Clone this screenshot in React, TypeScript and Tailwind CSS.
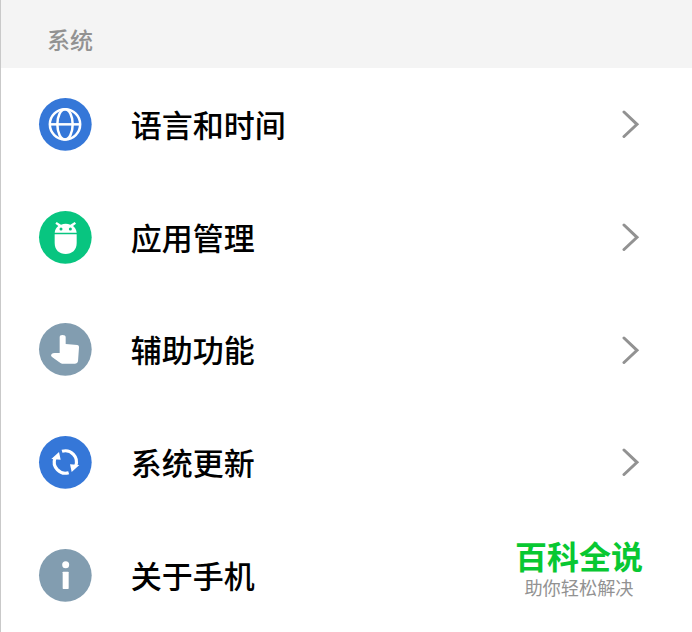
import type { ReactNode } from "react";

type Row = { label: string; color: string; icon: ReactNode; arrow: boolean };

const rows: Row[] = [
  {
    label: "语言和时间",
    color: "#3577d8",
    arrow: true,
    icon: (
      <g fill="none" stroke="#fff" strokeWidth="7.5">
        <circle cx="78" cy="79" r="45.5" />
        <ellipse cx="78" cy="79" rx="23" ry="45.5" />
        <path d="M32 79H124" />
      </g>
    ),
  },
  {
    label: "应用管理",
    color: "#08c580",
    arrow: true,
    icon: (
      <>
        <path
          fill="#fff"
          d="M47 65C48 56 52 49 58 45L49 38L53 33L66 41Q80 36 94 41L107 33L111 38L102 45C108 49 112 56 113 65ZM47 70H113V96C113 117 99 129 80 129S47 117 47 96Z"
        />
        <circle cx="66" cy="54" r="4.5" fill="#08c580" />
        <circle cx="94" cy="54" r="4.5" fill="#08c580" />
      </>
    ),
  },
  {
    label: "辅助功能",
    color: "#829db0",
    arrow: true,
    icon: (
      <path
        fill="#fff"
        d="M62 43Q62 36 70 36Q80 36 80 43V63L115 66Q121 67 120 73L117 115Q116 122 108 122H69Q64 121 60 117L38 101Q34 96 38 93Q41 90 47 90H62Z"
      />
    ),
  },
  {
    label: "系统更新",
    color: "#3577d8",
    arrow: true,
    icon: (
      <>
        <g fill="none" stroke="#fff" strokeWidth="9.5">
          <path d="M69 46A33.5 33.5 0 0 1 110 90" />
          <path d="M89 110A33.5 33.5 0 0 1 48 66" />
        </g>
        <path fill="#fff" d="M60 48L37 69L65 71ZM98 108L121 87L93 85Z" />
      </>
    ),
  },
  {
    label: "关于手机",
    color: "#829db0",
    arrow: false,
    icon: (
      <>
        <circle cx="80" cy="47" r="10.5" fill="#fff" />
        <rect x="71" y="68" width="18" height="52" rx="2" fill="#fff" />
      </>
    ),
  },
];

function SettingRow({ label, color, icon, arrow }: Row) {
  return (
    <li className="flex h-[112.7px] items-center pr-[52.5px] pl-[38px]">
      <svg className="size-[52.7px] shrink-0 overflow-visible" viewBox="0 0 158 158">
        <circle cx="79" cy="79" r="79" fill={color} />
        {icon}
      </svg>
      <span className="ml-[39px] flex-1 pb-[1px] text-[31px] leading-[44px] font-medium text-black">{label}</span>
      {arrow && (
        <svg className="h-[28px] w-[18px]" viewBox="0 0 18 28" fill="none" stroke="#929292" strokeWidth="3" strokeLinecap="round">
          <path d="M2 2L15 14.3L2 26.5" />
        </svg>
      )}
    </li>
  );
}

export default function App() {
  return (
    <main className="relative h-[632px] w-[692px] overflow-hidden border-l border-[#c9c9c9] bg-white font-['Noto_Sans_CJK_SC',sans-serif]">
      <h2 className="flex h-[68px] items-end bg-[#f4f4f4] pb-[13px] pl-[46px] text-[23px] leading-[32px] font-medium text-[#929292]">
        系统
      </h2>
      <ul>
        {rows.map((row) => (
          <SettingRow key={row.label} {...row} />
        ))}
      </ul>
      <div className="absolute top-[534px] left-[513px] w-[130px] text-center whitespace-nowrap">
        <div className="text-[32px] leading-[42px] font-bold text-[#08c832]">百科全说</div>
        <div className="text-[18.2px] leading-[22px] text-[#929292]">助你轻松解决</div>
      </div>
    </main>
  );
}
